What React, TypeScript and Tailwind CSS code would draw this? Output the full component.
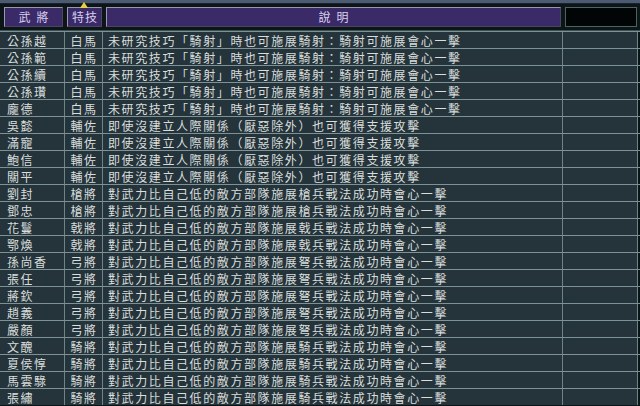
import * as React from 'react';

type Row = { name: string; skill: string; desc: string };

const D1 = '未研究技巧「騎射」時也可施展騎射：騎射可施展會心一擊';
const D2 = '即使沒建立人際關係（厭惡除外）也可獲得支援攻擊';
const D3 = (kind: string) => `對武力比自己低的敵方部隊施展${kind}戰法成功時會心一擊`;

const rows: Row[] = [
    { name: '公孫越', skill: '白馬', desc: D1 },
    { name: '公孫範', skill: '白馬', desc: D1 },
    { name: '公孫續', skill: '白馬', desc: D1 },
    { name: '公孫瓚', skill: '白馬', desc: D1 },
    { name: '龐德', skill: '白馬', desc: D1 },
    { name: '吳懿', skill: '輔佐', desc: D2 },
    { name: '滿寵', skill: '輔佐', desc: D2 },
    { name: '鮑信', skill: '輔佐', desc: D2 },
    { name: '關平', skill: '輔佐', desc: D2 },
    { name: '劉封', skill: '槍將', desc: D3('槍兵') },
    { name: '鄧忠', skill: '槍將', desc: D3('槍兵') },
    { name: '花鬘', skill: '戟將', desc: D3('戟兵') },
    { name: '鄂煥', skill: '戟將', desc: D3('戟兵') },
    { name: '孫尚香', skill: '弓將', desc: D3('弩兵') },
    { name: '張任', skill: '弓將', desc: D3('弩兵') },
    { name: '蔣欽', skill: '弓將', desc: D3('弩兵') },
    { name: '趙義', skill: '弓將', desc: D3('弩兵') },
    { name: '嚴顏', skill: '弓將', desc: D3('弩兵') },
    { name: '文醜', skill: '騎將', desc: D3('騎兵') },
    { name: '夏侯惇', skill: '騎將', desc: D3('騎兵') },
    { name: '馬雲騄', skill: '騎將', desc: D3('騎兵') },
    { name: '張繡', skill: '騎將', desc: D3('騎兵') },
];

const font = { fontFamily: '"Noto Sans CJK TC", "Noto Sans CJK SC", sans-serif' };

const HeaderCell: React.FC<{ label?: string; className?: string }> = ({ label, className }) => (
    <div className={`h-[20px] flex items-center justify-center whitespace-nowrap overflow-hidden border border-[#9a98aa] border-b-[#4a4660] border-r-[#4a4660] bg-[#3b2a68] text-[12px] leading-[14px] text-[#d8d0f0] ${className || ''}`}>
        {label}
    </div>
);

export default function App() {
    return (
        <div className="w-[640px] h-[406px] overflow-hidden bg-[#0b1416] text-[#d9dedb]" style={font}>
            {/* top band */}
            <div className="h-[4px] bg-[#4c5a72] border-b border-[#1a2230]" />
            {/* header */}
            <div className="h-[27px] flex items-center bg-[#0c1517] border-b border-[#3e5052]">
                <div className="w-[65px] pl-[4px] pr-[2px]">
                    <HeaderCell label="武將" className="w-[59px] tracking-[6px] pl-[6px]" />
                </div>
                <div className="w-[40px] pl-[2px] pr-[2px] relative">
                    <HeaderCell label="特技" className="w-[35px] tracking-[1px] pl-[1px]" />
                    <div className="absolute left-[15px] -top-[5px] w-0 h-0 border-l-[4px] border-r-[4px] border-b-[6px] border-l-transparent border-r-transparent border-b-[#e8d040]" />
                </div>
                <div className="w-[458px] pl-[1px] pr-[2px]">
                    <HeaderCell label="說明" className="w-[455px] tracking-[6px] pl-[6px]" />
                </div>
                <div className="w-[75px] pl-[2px]">
                    <div className="h-[20px] w-[72px] bg-[#020505] border border-[#4e6460]" />
                </div>
            </div>
            {/* rows */}
            <div className="bg-[#25343b]">
                {rows.map((r, i) => (
                    <div key={i} className="grid grid-cols-[65px_38px_460px_75px_2px] h-[17px] border-t border-[#7d9294] text-[12px] leading-[15px]">
                        <div className="pl-[7px] tracking-[1.5px] border-r border-[#6f8486] whitespace-nowrap overflow-hidden flex items-center">{r.name}</div>
                        <div className="tracking-[1.5px] pl-[1px] border-r border-[#6f8486] whitespace-nowrap overflow-hidden flex items-center justify-center">{r.skill}</div>
                        <div className="pl-[5px] tracking-[1.6px] border-r border-[#6f8486] whitespace-nowrap overflow-hidden flex items-center">{r.desc}</div>
                        <div className="border-r border-[#6f8486]" />
                        <div className="bg-[#0b1416]" />
                    </div>
                ))}
            </div>
        </div>
    );
}
